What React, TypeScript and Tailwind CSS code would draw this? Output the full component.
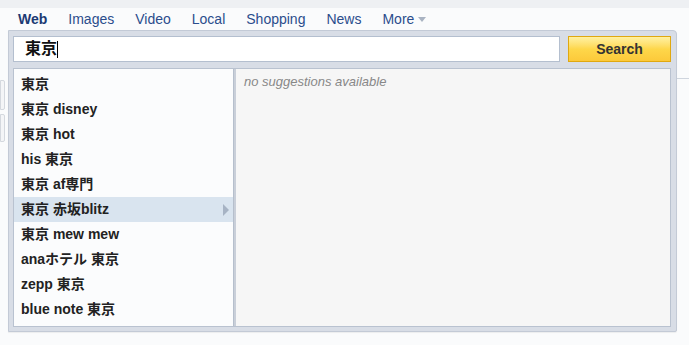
const font = { fontFamily: '"Liberation Sans", "Noto Sans CJK JP", sans-serif' };

const tabs = ["Images", "Video", "Local", "Shopping", "News"];

const suggestions = [
  "東京",
  "東京 disney",
  "東京 hot",
  "his 東京",
  "東京 af専門",
  "東京 赤坂blitz",
  "東京 mew mew",
  "anaホテル 東京",
  "zepp 東京",
  "blue note 東京",
];

function App() {
  return (
    <div className="w-[689px] h-[345px] overflow-hidden bg-[#fafbfc] relative" style={font}>
      <div className="h-[8px] bg-[#eef0f3]" />
      <div className="flex items-center h-[20px] mt-[1px] pl-[18px] gap-[21px] text-[14px] text-[#2b4d8c]">
        <span className="font-bold text-[#1c3a73]">Web</span>
        {tabs.map((t) => (
          <span key={t}>{t}</span>
        ))}
        <span className="flex items-center gap-[4px]">
          More
          <svg width="8" height="5" viewBox="0 0 8 5">
            <path d="M0 0h8L4 5z" fill="#a9b3c2" />
          </svg>
        </span>
      </div>

      <div className="absolute left-0 top-[80px] w-[5px] h-[30px] border border-[#d4d8de] rounded-r-[2px] bg-[#f4f5f7]" />
      <div className="absolute left-0 top-[114px] w-[5px] h-[28px] border border-[#d4d8de] rounded-r-[2px] bg-[#f4f5f7]" />
      <div className="absolute right-0 top-[78px] w-[12px] h-[1px] bg-[#cfd5de]" />

      <div className="ml-[8px] mt-[1px] w-[669px] bg-[#d8dde6] border border-[#c3cad6] rounded-tr-[4px] rounded-br-[2px] pl-[4px] pr-[5px] pt-[5px] pb-[4px] relative shadow-[0_1px_1px_rgba(0,0,0,0.06)]">
        <div className="flex gap-[8px]">
          <div className="flex-1 h-[26px] bg-white border border-[#b4bfcf] flex items-center pl-[11px]">
            <span className="text-[16px] font-bold text-[#111]">東京</span>
            <span className="w-[1px] h-[17px] bg-black" />
          </div>
          <button className="w-[103px] h-[26px] border border-[#e0a810] bg-gradient-to-b from-[#fff1a0] via-[#fed74a] to-[#fcc93a] text-[14px] font-bold text-[#333]">
            Search
          </button>
        </div>
        <div className="mt-[6px] h-[259px] border border-[#b9c2d0] flex">
          <div className="w-[219px] bg-[#fbfcfd] pt-[3px]">
            {suggestions.map((s, i) => (
              <div
                key={s}
                className={
                  "h-[25px] flex items-center justify-between pl-[7px] pr-[4px] text-[14px] font-bold text-[#222] " +
                  (i === 5 ? "bg-[#d9e4ef]" : "")
                }
              >
                <span>{s}</span>
                {i === 5 && (
                  <svg width="6" height="12" viewBox="0 0 6 12">
                    <path d="M0 0L6 6L0 12z" fill="#a7b3c4" />
                  </svg>
                )}
              </div>
            ))}
          </div>
          <div className="w-[3px] bg-[#c9cfd9] border-l border-[#b6bfcc]" />
          <div className="flex-1 bg-[#f6f6f6] pl-[8px] pt-[3px] text-[13px] italic text-[#888]">
            no suggestions available
          </div>
        </div>
      </div>
    </div>
  );
}

export default App;
